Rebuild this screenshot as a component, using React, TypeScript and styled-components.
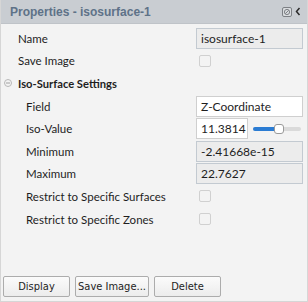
import React from "react";
import styled, { createGlobalStyle } from "styled-components";

const Global = createGlobalStyle`
  html, body { margin: 0; padding: 0; background: #f3f3f3; }
  body { font-family: Lato, "Noto Sans", sans-serif; }
`;

const Panel = styled.div`
  width: 308px;
  height: 302px;
  box-sizing: border-box;
  display: flex;
  flex-direction: column;
  background: #f3f3f3;
  border: 1px solid #d6d6d6;
  border-top: none;
`;

const Header = styled.div`
  height: 24px;
  flex: none;
  display: flex;
  align-items: center;
  padding: 0 6px 0 9px;
  background: #c9cdd2;
  border-bottom: 1px solid #bfc3c8;
  box-sizing: border-box;
`;

const Title = styled.div`
  flex: 1;
  font-family: "Liberation Sans", Arial, sans-serif;
  font-size: 12px;
  font-weight: 700;
  color: #5e7288;
`;

const HeaderIcons = styled.div`
  display: flex;
  align-items: center;
  gap: 3px;
`;

const Body = styled.div`
  flex: 1;
  padding-top: 3px;
  display: flex;
  flex-direction: column;
`;

const Row = styled.div<{ $indent: number }>`
  height: 22.6px;
  display: grid;
  align-items: center;
  padding-left: ${(p) => p.$indent}px;
  box-sizing: border-box;
  grid-template-columns: ${(p) => 195 - p.$indent}px 107px;
`;

const Label = styled.div`
  font-size: 11.5px;
  color: #1e1e1e;
  white-space: nowrap;
`;

const SectionRow = styled.div`
  height: 22.6px;
  display: flex;
  align-items: center;
  padding-left: 3px;
  gap: 6px;
`;

const SectionTitle = styled.div`
  font-size: 11.2px;
  font-weight: 700;
  color: #1e1e1e;
`;

const Field = styled.div<{ $disabled?: boolean; $w?: number }>`
  width: ${(p) => p.$w ?? 107}px;
  height: 21px;
  box-sizing: border-box;
  display: flex;
  align-items: center;
  padding-left: 4px;
  font-size: 12px;
  color: #1e1e1e;
  background: ${(p) => (p.$disabled ? "#ececec" : "#ffffff")};
  border: 1px solid ${(p) => (p.$disabled ? "#c3cad1" : "#cfcfcf")};
  white-space: nowrap;
  overflow: hidden;
`;

const Check = styled.div`
  width: 12px;
  height: 12px;
  margin-left: 3px;
  box-sizing: border-box;
  border: 1px solid #d0d0d0;
  border-radius: 2px;
  background: #f3f3f3;
`;

const ValueGroup = styled.div`
  display: flex;
  align-items: center;
  gap: 5px;
`;

const Slider = styled.div`
  position: relative;
  width: 48px;
  height: 10px;
`;

const Track = styled.div`
  position: absolute;
  left: 0;
  right: 0;
  top: 3px;
  height: 4px;
  border-radius: 2px;
  background: #dadada;
`;

const Fill = styled.div`
  position: absolute;
  left: 0;
  top: 3px;
  height: 4px;
  border-radius: 2px;
  background: #2b7cd3;
`;

const Thumb = styled.div`
  position: absolute;
  top: 0;
  width: 10px;
  height: 10px;
  box-sizing: border-box;
  border: 1px solid #9a9a9a;
  border-radius: 3px;
  background: #ffffff;
`;

const Footer = styled.div`
  flex: none;
  display: flex;
  gap: 5px;
  padding: 0 0 4px 2px;
`;

const Button = styled.button<{ $w: number }>`
  width: ${(p) => p.$w}px;
  height: 21px;
  box-sizing: border-box;
  padding: 0;
  font-family: "DejaVu Sans Condensed", "DejaVu Sans", sans-serif;
  font-size: 11px;
  color: #1e1e1e;
  white-space: nowrap;
  background: linear-gradient(#fbfbfb, #ececec);
  border: 1px solid #acacac;
  border-radius: 2px;
`;

const CollapseIcon = () => (
  <svg width="8" height="8" viewBox="0 0 8 8">
    <circle cx="4" cy="4" r="3.5" fill="none" stroke="#b8b8b8" strokeWidth="1" />
    <line x1="2" y1="4" x2="6" y2="4" stroke="#a0a0a0" strokeWidth="1" />
  </svg>
);

const PinIcon = () => (
  <svg width="10" height="10" viewBox="0 0 10 10">
    <rect x="0.5" y="0.5" width="9" height="9" rx="1.5" fill="#d8dbde" stroke="#7d8085" />
    <circle cx="5" cy="5" r="2.6" fill="none" stroke="#7d8085" strokeWidth="1" />
    <line x1="3.3" y1="6.7" x2="6.7" y2="3.3" stroke="#7d8085" strokeWidth="1" />
  </svg>
);

const ChevronIcon = () => (
  <svg width="6" height="9" viewBox="0 0 6 9">
    <polyline points="4.5,1 1.5,4.5 4.5,8" fill="none" stroke="#2a2a2a" strokeWidth="1.5" />
  </svg>
);

export default function App() {
  const sliderFrac = 0.5;
  return (
    <>
      <Global />
      <Panel>
        <Header>
          <Title>Properties - isosurface-1</Title>
          <HeaderIcons>
            <PinIcon />
            <ChevronIcon />
          </HeaderIcons>
        </Header>
        <Body>
          <Row $indent={17}>
            <Label>Name</Label>
            <Field $disabled>isosurface-1</Field>
          </Row>
          <Row $indent={17}>
            <Label>Save Image</Label>
            <Check />
          </Row>
          <SectionRow>
            <CollapseIcon />
            <SectionTitle>Iso-Surface Settings</SectionTitle>
          </SectionRow>
          <Row $indent={25}>
            <Label>Field</Label>
            <Field>Z-Coordinate</Field>
          </Row>
          <Row $indent={25}>
            <Label>Iso-Value</Label>
            <ValueGroup>
              <Field $w={52}>11.3814</Field>
              <Slider>
                <Track />
                <Fill style={{ width: `${sliderFrac * 48}px` }} />
                <Thumb style={{ left: `${sliderFrac * 48 - 3}px` }} />
              </Slider>
            </ValueGroup>
          </Row>
          <Row $indent={25}>
            <Label>Minimum</Label>
            <Field $disabled>-2.41668e-15</Field>
          </Row>
          <Row $indent={25}>
            <Label>Maximum</Label>
            <Field $disabled>22.7627</Field>
          </Row>
          <Row $indent={25}>
            <Label>Restrict to Specific Surfaces</Label>
            <Check />
          </Row>
          <Row $indent={25}>
            <Label>Restrict to Specific Zones</Label>
            <Check />
          </Row>
        </Body>
        <Footer>
          <Button $w={67}>Display</Button>
          <Button $w={74}>Save Image...</Button>
          <Button $w={67}>Delete</Button>
        </Footer>
      </Panel>
    </>
  );
}
